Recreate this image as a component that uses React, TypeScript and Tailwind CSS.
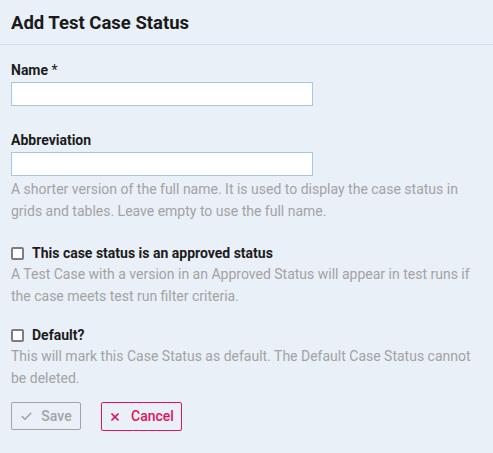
import { Check, X } from "lucide-react";

const Field = ({ label, required, help }: { label: string; required?: boolean; help?: string }) => (
  <div>
    <label className="block text-[14px] leading-[20px] font-bold text-[#1c1c1c] mb-[2px]">
      {label}
      {required && <span className="font-normal"> *</span>}
    </label>
    <input className="block w-[302px] h-[24px] bg-white border border-[#a8c6df] outline-none" />
    {help && <p className="mt-[2px] w-[462px] text-[14px] leading-[22px] text-[#a3a3a3]">{help}</p>}
  </div>
);

const CheckField = ({ label, help }: { label: string; help: string }) => (
  <div>
    <label className="flex items-center gap-[8px] h-[20px] text-[14px] font-bold text-[#1c1c1c]">
      <span className="w-[13px] h-[13px] border-2 border-[#7c7c86] rounded-[2px] bg-white" />
      {label}
    </label>
    <p className="w-[462px] text-[14px] leading-[22px] text-[#a3a3a3]">{help}</p>
  </div>
);

export default function App() {
  return (
    <div className="w-[493px] h-[453px] bg-[#e9f0f7]" style={{ fontFamily: "Roboto, 'Liberation Sans', sans-serif" }}>
      <div className="h-[45px] border-b border-[#cfe0ec] flex items-center px-[11px] pt-[3px]">
        <h1 className="text-[18.5px] font-bold text-[#1a1a1a]">Add Test Case Status</h1>
      </div>

      <div className="px-[11px] pt-[15px]">
        <Field label="Name" required />
        <div className="mt-[24px]">
          <Field
            label="Abbreviation"
            help="A shorter version of the full name. It is used to display the case status in grids and tables. Leave empty to use the full name."
          />
        </div>
        <div className="mt-[21px]">
          <CheckField
            label="This case status is an approved status"
            help="A Test Case with a version in an Approved Status will appear in test runs if the case meets test run filter criteria."
          />
        </div>
        <div className="mt-[18px]">
          <CheckField
            label="Default?"
            help="This will mark this Case Status as default. The Default Case Status cannot be deleted."
          />
        </div>

        <div className="mt-[13px] flex gap-[20px] items-start">
          <button className="w-[70px] h-[28px] flex items-center justify-center gap-[8px] border border-[#a3a3a3] rounded-[2px] text-[14px] font-medium text-[#a3a3a3]">
            <Check className="w-[13px] h-[13px]" strokeWidth={3} />
            Save
          </button>
          <button className="w-[81px] h-[29px] flex items-center justify-center gap-[10px] border border-[#e0155c] rounded-[2px] text-[14px] font-medium text-[#e0155c]">
            <X className="w-[12px] h-[12px]" strokeWidth={3.5} />
            Cancel
          </button>
        </div>
      </div>
    </div>
  );
}
